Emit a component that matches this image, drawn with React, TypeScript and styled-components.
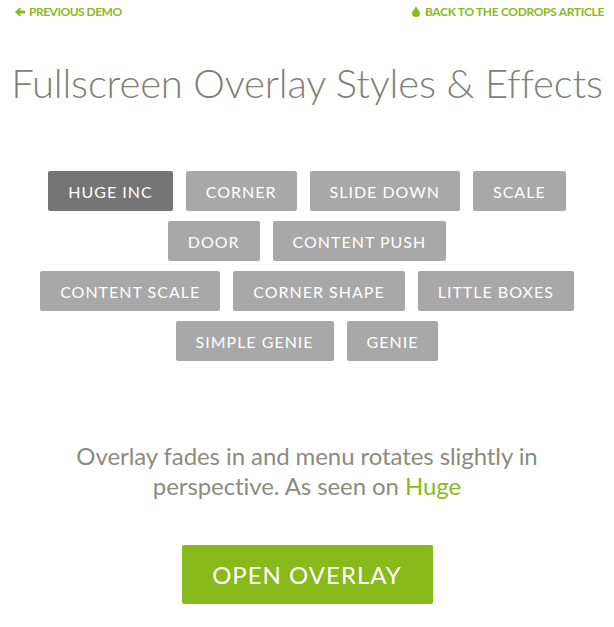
import styled, { createGlobalStyle } from "styled-components";

const GlobalStyle = createGlobalStyle`
  html, body {
    margin: 0;
    padding: 0;
    background: #fff;
    font-family: Lato, "Open Sans", sans-serif;
  }
`;

const Page = styled.div`
  width: 614px;
  height: 627px;
  overflow: hidden;
`;

const TopBar = styled.div`
  display: flex;
  justify-content: space-between;
  padding: 4px 10px 0 15px;
  height: 16px;
`;

const TopLink = styled.a<{ $spacing: number; $gap: number }>`
  display: flex;
  align-items: center;
  gap: ${(p) => p.$gap}px;
  height: 15px;
  color: #89ba1c;
  font-size: 12px;
  font-weight: 700;
  letter-spacing: ${(p) => p.$spacing}px;
  text-transform: uppercase;
  text-decoration: none;
`;

const Title = styled.h1`
  margin: 39px 0 0;
  color: #7f8075;
  font-size: 40px;
  font-weight: 300;
  letter-spacing: -0.17px;
  line-height: 48px;
  text-align: center;
  white-space: nowrap;
`;

const Tabs = styled.div`
  display: flex;
  flex-direction: column;
  gap: 10px;
  margin-top: 64px;
`;

const TabRow = styled.div`
  display: flex;
  justify-content: center;
  gap: 13px;
`;

const Tab = styled.button<{ $active?: boolean }>`
  height: 40px;
  padding: 0 20px;
  border: 0;
  border-radius: 2px;
  background: ${(p) => (p.$active ? "#757575" : "#a8a8a8")};
  color: #fff;
  font-family: inherit;
  font-size: 16px;
  font-weight: 400;
  letter-spacing: 1px;
  text-transform: uppercase;
`;

const Description = styled.p`
  margin: 80px auto 0;
  width: 500px;
  color: #8b8c7f;
  font-size: 24px;
  letter-spacing: -0.08px;
  line-height: 30px;
  text-align: center;

  a {
    color: #89ba1c;
    text-decoration: none;
  }
`;

const Trigger = styled.div`
  display: flex;
  justify-content: center;
  margin-top: 44px;
`;

const OpenButton = styled.button`
  width: 251px;
  height: 59px;
  border: 0;
  border-radius: 2px;
  background: #89ba1c;
  color: #fff;
  font-family: inherit;
  font-size: 24px;
  font-weight: 400;
  letter-spacing: 1px;
  text-transform: uppercase;
`;

const rows = [
  ["Huge Inc", "Corner", "Slide down", "Scale"],
  ["Door", "Content push"],
  ["Content scale", "Corner shape", "Little boxes"],
  ["Simple genie", "Genie"],
];

export default function App() {
  return (
    <Page>
      <GlobalStyle />
      <TopBar>
        <TopLink href="#" $spacing={-0.5} $gap={4}>
          <svg width="10" height="10" viewBox="0 0 10 10">
            <path d="M4.8 .5 L0 5 L4.8 9.5 L6.1 8.2 L4.3 6.5 H10 V3.5 H4.3 L6.1 1.8 Z" fill="#89ba1c" />
          </svg>
          Previous Demo
        </TopLink>
        <TopLink href="#" $spacing={-0.33} $gap={5}>
          <svg width="8" height="11" viewBox="0 0 8 11">
            <path d="M4 0 C4.6 2.4 8 5 8 7.2 A4 3.8 0 0 1 0 7.2 C0 5 3.4 2.4 4 0 Z" fill="#89ba1c" />
          </svg>
          Back to the Codrops article
        </TopLink>
      </TopBar>
      <Title>Fullscreen Overlay Styles &amp; Effects</Title>
      <Tabs>
        {rows.map((row, r) => (
          <TabRow key={r}>
            {row.map((t) => (
              <Tab key={t} $active={t === "Huge Inc"}>
                {t}
              </Tab>
            ))}
          </TabRow>
        ))}
      </Tabs>
      <Description>
        Overlay fades in and menu rotates slightly in perspective. As seen on <a href="#">Huge</a>
      </Description>
      <Trigger>
        <OpenButton>Open Overlay</OpenButton>
      </Trigger>
    </Page>
  );
}
